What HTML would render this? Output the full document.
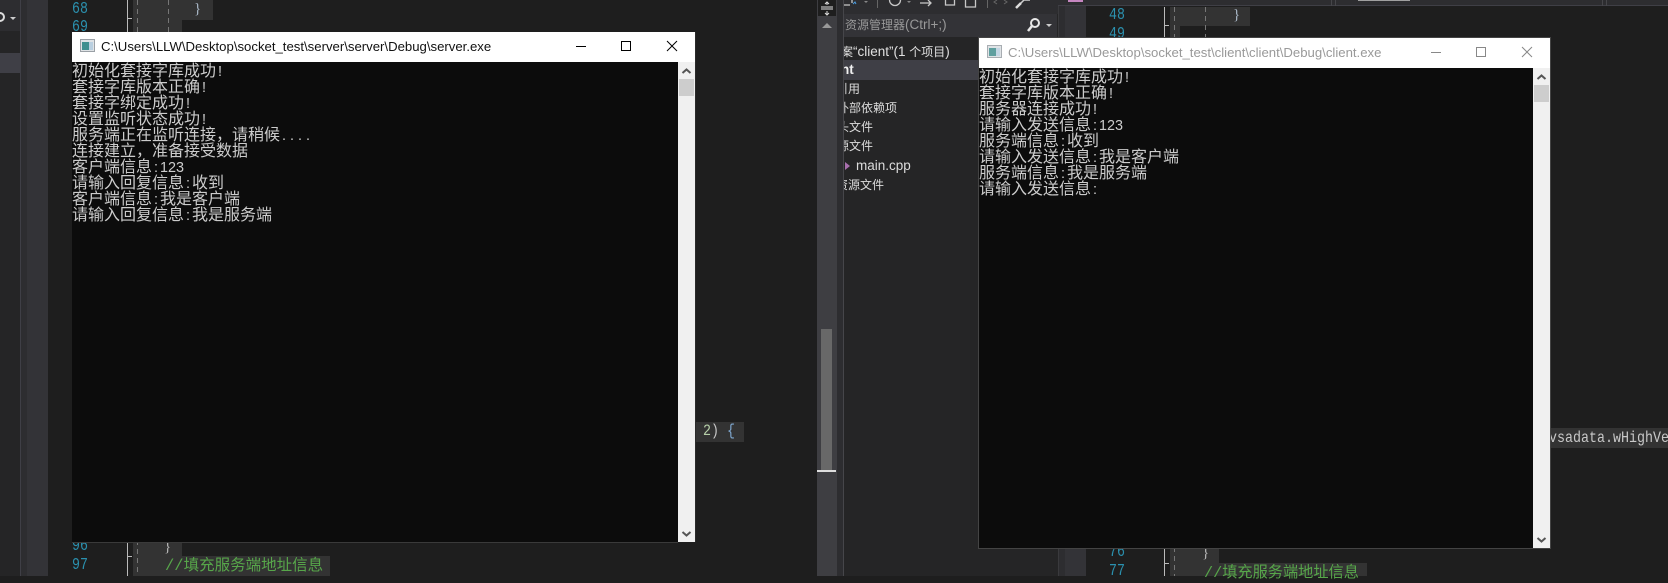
<!DOCTYPE html>
<html lang="zh"><head><meta charset="utf-8"><title>socket</title>
<style>
*{box-sizing:border-box}
html,body{margin:0;padding:0;width:1668px;height:576px;overflow:hidden;background:#1e1e1e}
.r{position:absolute}
.t{position:absolute;white-space:pre;line-height:20px}
.num{font-family:"Liberation Mono",monospace;font-size:17px;color:#2b91af;transform:scaleX(.78);transform-origin:0 50%}
.code{font-family:"Liberation Mono",monospace;font-size:16px;transform:scaleX(.833);transform-origin:0 0}
.con{position:absolute;left:0;white-space:pre;font-family:"WenQuanYi Zen Hei","Noto Sans CJK SC",sans-serif;font-size:16px;line-height:16px;height:16px;color:#cccccc;margin-top:-1px}
.con i{font-style:normal;font-family:"Liberation Sans",sans-serif;font-size:14.4px;padding-left:2px;letter-spacing:2px}
.con b{font-weight:normal;font-family:"Liberation Sans",sans-serif;font-size:14.4px}
.con u{text-decoration:none;font-family:"Liberation Sans",sans-serif;font-size:14.4px;letter-spacing:4px;padding-left:2px}
.title{position:absolute;white-space:pre;font-family:"Liberation Sans",sans-serif;font-size:13.17px;line-height:18px}
.side{position:absolute;white-space:pre;font-family:"Noto Sans CJK SC",sans-serif;font-size:12px;line-height:20px;color:#dcdcdc}
.side s{text-decoration:none;font-family:"Liberation Sans",sans-serif;font-size:13.5px}
.dash{position:absolute;width:1px;background:repeating-linear-gradient(#777 0 5px,transparent 5px 9px)}
</style></head><body>

<!-- left IDE panels -->
<div class="r" style="left:0;top:0;width:20px;height:576px;background:#252526"></div>
<div class="r" style="left:0;top:0;width:20px;height:31px;background:#2d2d30"></div>
<div class="r" style="left:0;top:53px;width:20px;height:20px;background:#3f3f46"></div>
<div class="r" style="left:20px;top:0;width:7px;height:576px;background:#2d2d30;border-left:1px solid #3f3f46"></div>
<div class="r" style="left:27px;top:0;width:21px;height:576px;background:#333337"></div>
<svg class="r" style="left:0;top:10px" width="20" height="16"><circle cx="0" cy="7" r="4" fill="none" stroke="#ddd" stroke-width="2"/><path d="M10 7h6l-3 3z" fill="#ccc"/></svg>

<!-- left editor -->
<div class="r" style="left:133px;top:0;width:80px;height:20px;background:#333"></div>
<div class="r" style="left:133px;top:20px;width:49px;height:12px;background:#333"></div>
<div class="r" style="left:133px;top:542px;width:49px;height:14px;background:#333"></div>
<div class="r" style="left:133px;top:556px;width:197px;height:20px;background:#333"></div>
<div class="r" style="left:127px;top:0;width:1px;height:576px;background:#bbb"></div>
<div class="r" style="left:127px;top:18px;width:5px;height:1px;background:#bbb"></div>
<div class="r" style="left:127px;top:556px;width:5px;height:1px;background:#bbb"></div>
<div class="dash" style="left:137px;top:0;height:576px"></div>
<div class="dash" style="left:168px;top:0;height:32px"></div>
<div class="t num" style="left:72px;top:0">68</div>
<div class="t num" style="left:72px;top:18px">69</div>
<div class="t num" style="left:72px;top:537px">96</div>
<div class="t num" style="left:72px;top:556px">97</div>
<div class="t" style="left:194px;top:-1px;font:15px/20px 'Liberation Serif',serif;color:#a9b7c6">}</div>
<div class="t" style="left:164px;top:537px;font:15px/20px 'Liberation Serif',serif;color:#b8b8b8">}</div>
<div class="t" style="left:165px;top:556px;font-family:'Liberation Mono','WenQuanYi Zen Hei',monospace;font-size:15.5px;color:#57a64a">//填充服务端地址信息</div>

<div class="r" style="left:695px;top:422px;width:49px;height:20px;background:#333"></div>
<div class="t code" style="left:703px;top:421px;color:#b5cea8">2<span style="color:#c8c8c8">)</span> <span style="color:#7fa8d0">{</span></div>

<!-- splitter / scrollbar -->
<div class="r" style="left:817px;top:0;width:20px;height:576px;background:#3e3e42"></div>
<div class="r" style="left:818px;top:0;width:18px;height:16px;background:#1e1e1e"></div>
<svg class="r" style="left:818px;top:0" width="18" height="16"><path d="M9 2v3M9 11v4M3 7h12M3 9h12M7 4l2-2 2 2M7 13l2 2 2-2" stroke="#ddd" fill="none"/></svg>
<svg class="r" style="left:817px;top:20px" width="20" height="10"><path d="M5 8l5-5 5 5z" fill="#999"/></svg>
<div class="r" style="left:821px;top:329px;width:11px;height:141px;background:#686868"></div>
<div class="r" style="left:817px;top:470px;width:19px;height:2px;background:#ddd"></div>
<div class="r" style="left:837px;top:0;width:6px;height:576px;background:#2d2d30"></div>
<div class="r" style="left:843px;top:0;width:1px;height:576px;background:#46464a"></div>

<!-- solution explorer -->
<div class="r" style="left:844px;top:0;width:214px;height:576px;background:#252526;overflow:hidden">
  <div class="r" style="left:0;top:0;width:214px;height:14px;background:#2d2d30"></div>
  <div class="r" style="left:0;top:14px;width:213px;height:23px;background:#333337"></div>
  <div class="r" style="left:0;top:60px;width:136px;height:20px;background:#3f3f46"></div>
  <div class="side" style="left:1px;top:15px;color:#999">资源管理器<s>(Ctrl+;)</s></div>
  <div class="side" style="left:-3px;top:42px;color:#e0e0e0">案<s>“client”(1 </s>个项目<s>)</s></div>
  <div class="side" style="left:-3px;top:60px;font-weight:bold;color:#f0f0f0"><s>nt</s></div>
  <div class="side" style="left:-8px;top:79px">引用</div>
  <div class="side" style="left:-7px;top:98px">外部依赖项</div>
  <div class="side" style="left:-7px;top:117px">头文件</div>
  <div class="side" style="left:-7px;top:136px">源文件</div>
  <div class="r" style="left:1px;top:162px;width:0;height:0;border-left:5px solid #a86fae;border-top:4px solid transparent;border-bottom:4px solid transparent"></div>
  <div class="side" style="left:12px;top:156px"><s>main.cpp</s></div>
  <div class="side" style="left:-8px;top:175px">资源文件</div>
</div>
<svg class="r" style="left:844px;top:0" width="216" height="37">
  <path d="M-4 0v5h10M8 0v3M45.500 0a5.500 5.500 0 0 0 11 0M76 3h11M84 0l3 3-3 3M101.500 0v5h9v-5M121.500 0v7h10v-7" stroke="#c8c8c8" fill="none" stroke-width="1.300"/>
  <path d="M9 4l2-2 1 2" stroke="#4a9be0" fill="none"/>
  <path d="M33.500 0v8M143.500 0v8M153 0l-3 2 3 2M160 0l3 2-3 2" stroke="#666" fill="none"/>
  <path d="M172 8l5-5" stroke="#ddd" stroke-width="2.500"/><path d="M177 3l3-3h6" stroke="#ccc" stroke-width="1.500" fill="none"/>
  <path d="M20 1h4l-2 2zM63 1h4l-2 2z" fill="#888"/>
  <circle cx="191" cy="23" r="4" fill="none" stroke="#e8e8e8" stroke-width="2"/>
  <path d="M188 26l-4 5" stroke="#e8e8e8" stroke-width="2.500"/>
  <path d="M202 24h6l-3 3z" fill="#ccc"/>
</svg>

<!-- right editor -->
<div class="r" style="left:1058px;top:0;width:7px;height:576px;background:#2d2d30;border-left:1px solid #3a3a3d"></div>
<div class="r" style="left:1065px;top:6px;width:21px;height:570px;background:#333337"></div>
<div class="r" style="left:1058px;top:0;width:610px;height:6px;background:#2d2d30;border-bottom:1px solid #3f3f46"></div>
<div class="r" style="left:1068px;top:0;width:15px;height:2px;background:#c586c0"></div>
<div class="r" style="left:1331px;top:0;width:1px;height:6px;background:#46464a"></div>
<div class="r" style="left:1335px;top:0;width:1px;height:6px;background:#46464a"></div>
<div class="r" style="left:1602px;top:0;width:1px;height:6px;background:#46464a"></div>
<div class="r" style="left:1606px;top:0;width:1px;height:6px;background:#46464a"></div>
<div class="r" style="left:1358px;top:0;width:52px;height:1px;background:#a0a0a0"></div>
<div class="r" style="left:1170px;top:7px;width:80px;height:19px;background:#333"></div>
<div class="r" style="left:1170px;top:26px;width:10px;height:12px;background:#333"></div>
<div class="r" style="left:1170px;top:548px;width:49px;height:15px;background:#333"></div>
<div class="r" style="left:1170px;top:563px;width:197px;height:13px;background:#333"></div>
<div class="r" style="left:1164px;top:7px;width:1px;height:569px;background:#bbb"></div>
<div class="r" style="left:1164px;top:25px;width:5px;height:1px;background:#bbb"></div>
<div class="r" style="left:1164px;top:563px;width:5px;height:1px;background:#bbb"></div>
<div class="dash" style="left:1174px;top:7px;height:569px"></div>
<div class="dash" style="left:1205px;top:7px;height:31px"></div>
<div class="t num" style="left:1109px;top:6px">48</div>
<div class="t num" style="left:1109px;top:25px">49</div>
<div class="t num" style="left:1109px;top:543px">76</div>
<div class="t num" style="left:1109px;top:562px">77</div>
<div class="t" style="left:1233px;top:5px;font:15px/20px 'Liberation Serif',serif;color:#a9b7c6">}</div>
<div class="t" style="left:1202px;top:543px;font:15px/20px 'Liberation Serif',serif;color:#b8b8b8">}</div>
<div class="t" style="left:1204px;top:563px;font-family:'Liberation Mono','WenQuanYi Zen Hei',monospace;font-size:15.2px;color:#57a64a">//填充服务端地址信息</div>
<div class="r" style="left:1550px;top:428px;width:118px;height:20px;background:#333;overflow:hidden"><div class="t code" style="left:-1px;top:0;color:#c8c8c8">vsadata.wHighVersion</div></div>

<!-- server console -->
<div class="r" style="left:72px;top:32px;width:623px;height:510px;background:#0c0c0c;overflow:hidden">
  <div class="r" style="left:0;top:0;width:623px;height:30px;background:#fff"></div>
  <svg class="r" style="left:8px;top:7px" width="15" height="14"><rect x=".5" y=".5" width="14" height="12" fill="#dfe3e6" stroke="#9aa0a6"/><rect x="2" y="3" width="7" height="8" fill="#3f8f8f"/><rect x="9" y="3" width="4" height="8" fill="#b9cfe0"/></svg>
  <div class="title" style="left:29px;top:6px;color:#111">C:\Users\LLW\Desktop\socket_test\server\server\Debug\server.exe</div>
  <svg class="r" style="left:500px;top:0" width="123" height="30"><path d="M4 14.5h10" stroke="#000" fill="none"/><path d="M49.5 9.5h9v9h-9z" stroke="#000" fill="none"/><path d="M95 9l10 10M105 9l-10 10" stroke="#000" fill="none"/></svg>
  <div class="r" style="left:606px;top:30px;width:17px;height:480px;background:#f0f0f0"></div>
  <div class="r" style="left:607px;top:47px;width:15px;height:17px;background:#cdcdcd"></div>
  <svg class="r" style="left:607px;top:34px" width="15" height="10"><path d="M3.5 7l4-3.500 4 3.500" stroke="#555" stroke-width="2" fill="none"/></svg>
  <svg class="r" style="left:607px;top:497px" width="15" height="10"><path d="M3.500 3l4 3.500 4-3.500" stroke="#555" stroke-width="2" fill="none"/></svg>
  <div class="con" style="top:30px">初始化套接字库成功<i>!</i></div>
  <div class="con" style="top:46px">套接字库版本正确<i>!</i></div>
  <div class="con" style="top:62px">套接字绑定成功<i>!</i></div>
  <div class="con" style="top:78px">设置监听状态成功<i>!</i></div>
  <div class="con" style="top:94px">服务端正在监听连接，请稍候<u>....</u></div>
  <div class="con" style="top:110px">连接建立，准备接受数据</div>
  <div class="con" style="top:126px">客户端信息<i>:</i><b>123</b></div>
  <div class="con" style="top:142px">请输入回复信息<i>:</i>收到</div>
  <div class="con" style="top:158px">客户端信息<i>:</i>我是客户端</div>
  <div class="con" style="top:174px">请输入回复信息<i>:</i>我是服务端</div>
</div>
<div class="r" style="left:695px;top:32px;width:1px;height:510px;background:#2a2a2a"></div>
<div class="r" style="left:72px;top:542px;width:606px;height:1px;background:#3a3a3a"></div>

<!-- client console -->
<div class="r" style="left:978px;top:37px;width:573px;height:512px;border:1px solid #444;background:#0c0c0c"></div>
<div class="r" style="left:979px;top:38px;width:571px;height:510px;background:#0c0c0c;overflow:hidden">
  <div class="r" style="left:0;top:0;width:571px;height:30px;background:#fff"></div>
  <svg class="r" style="left:8px;top:7px" width="15" height="14"><rect x=".5" y=".5" width="14" height="12" fill="#dfe3e6" stroke="#a8adb2"/><rect x="2" y="3" width="7" height="8" fill="#5f9f9f"/><rect x="9" y="3" width="4" height="8" fill="#c4d6e4"/></svg>
  <div class="title" style="left:29px;top:6px;color:#999">C:\Users\LLW\Desktop\socket_test\client\client\Debug\client.exe</div>
  <svg class="r" style="left:441px;top:0" width="130" height="30"><path d="M11 14.500h10" stroke="#888" fill="none"/><path d="M56.500 9.500h9v9h-9z" stroke="#888" fill="none"/><path d="M102 9l10 10M112 9l-10 10" stroke="#888" fill="none"/></svg>
  <div class="r" style="left:554px;top:30px;width:17px;height:480px;background:#f0f0f0"></div>
  <div class="r" style="left:555px;top:47px;width:15px;height:17px;background:#cdcdcd"></div>
  <svg class="r" style="left:555px;top:34px" width="15" height="10"><path d="M3.500 7l4-3.500 4 3.500" stroke="#555" stroke-width="2" fill="none"/></svg>
  <svg class="r" style="left:555px;top:497px" width="15" height="10"><path d="M3.500 3l4 3.500 4-3.500" stroke="#555" stroke-width="2" fill="none"/></svg>
  <div class="con" style="top:30px">初始化套接字库成功<i>!</i></div>
  <div class="con" style="top:46px">套接字库版本正确<i>!</i></div>
  <div class="con" style="top:62px">服务器连接成功<i>!</i></div>
  <div class="con" style="top:78px">请输入发送信息<i>:</i><b>123</b></div>
  <div class="con" style="top:94px">服务端信息<i>:</i>收到</div>
  <div class="con" style="top:110px">请输入发送信息<i>:</i>我是客户端</div>
  <div class="con" style="top:126px">服务端信息<i>:</i>我是服务端</div>
  <div class="con" style="top:142px">请输入发送信息<i>:</i></div>
</div>
</body></html>
